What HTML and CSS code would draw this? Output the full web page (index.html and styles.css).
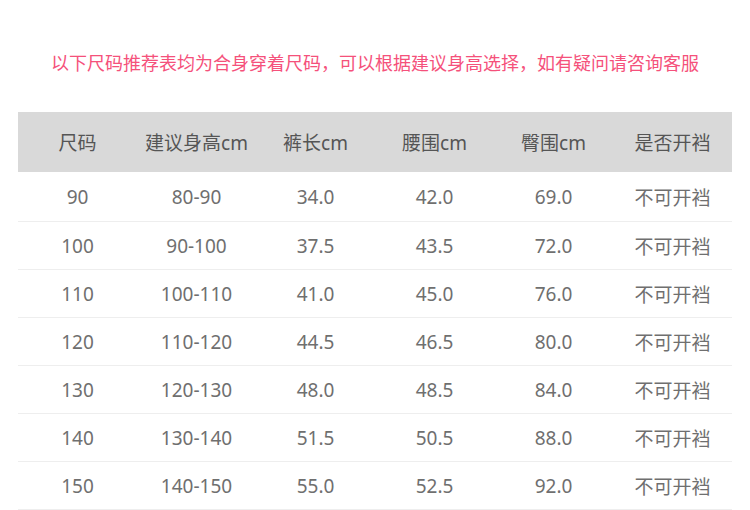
FILE: index.html
```html
<!DOCTYPE html>
<html lang="zh-CN">
<head>
<meta charset="utf-8">
<link rel="stylesheet" href="styles.css">
</head>
<body>
<div class="page">
  <p class="notice">以下尺码推荐表均为合身穿着尺码，可以根据建议身高选择，如有疑问请咨询客服</p>
  <table class="size-table">
    <thead>
      <tr><th>尺码</th><th>建议身高cm</th><th>裤长cm</th><th>腰围cm</th><th>臀围cm</th><th>是否开裆</th></tr>
    </thead>
    <tbody>
      <tr><td>90</td><td>80-90</td><td>34.0</td><td>42.0</td><td>69.0</td><td>不可开裆</td></tr>
      <tr><td>100</td><td>90-100</td><td>37.5</td><td>43.5</td><td>72.0</td><td>不可开裆</td></tr>
      <tr><td>110</td><td>100-110</td><td>41.0</td><td>45.0</td><td>76.0</td><td>不可开裆</td></tr>
      <tr><td>120</td><td>110-120</td><td>44.5</td><td>46.5</td><td>80.0</td><td>不可开裆</td></tr>
      <tr><td>130</td><td>120-130</td><td>48.0</td><td>48.5</td><td>84.0</td><td>不可开裆</td></tr>
      <tr><td>140</td><td>130-140</td><td>51.5</td><td>50.5</td><td>88.0</td><td>不可开裆</td></tr>
      <tr><td>150</td><td>140-150</td><td>55.0</td><td>52.5</td><td>92.0</td><td>不可开裆</td></tr>
    </tbody>
  </table>
</div>
</body>
</html>
```
FILE: styles.css
```css
html, body {
  margin: 0;
  padding: 0;
  background: #ffffff;
}
.page {
  width: 750px;
  padding: 49px 18px 0 18px;
  box-sizing: border-box;
  font-family: "Noto Sans", "Noto Sans CJK SC", sans-serif;
}
.notice {
  margin: 0 0 37px 0;
  text-align: center;
  font-size: 18px;
  line-height: 26px;
  color: #f5517b;
  font-family: "Noto Sans CJK SC", sans-serif;
}
.size-table {
  width: 714px;
  border-collapse: collapse;
  table-layout: fixed;
}
.size-table th {
  height: 60px;
  padding: 0;
  background: #d9d9d9;
  font-weight: normal;
  font-size: 19px;
  color: #555555;
  text-align: center;
}
.size-table td {
  height: 47px;
  padding: 0;
  border-bottom: 1px solid #eeeeee;
  font-size: 19px;
  color: #6f6f6f;
  text-align: center;
}
.size-table tbody tr:first-child td {
  height: 49px;
}
```
